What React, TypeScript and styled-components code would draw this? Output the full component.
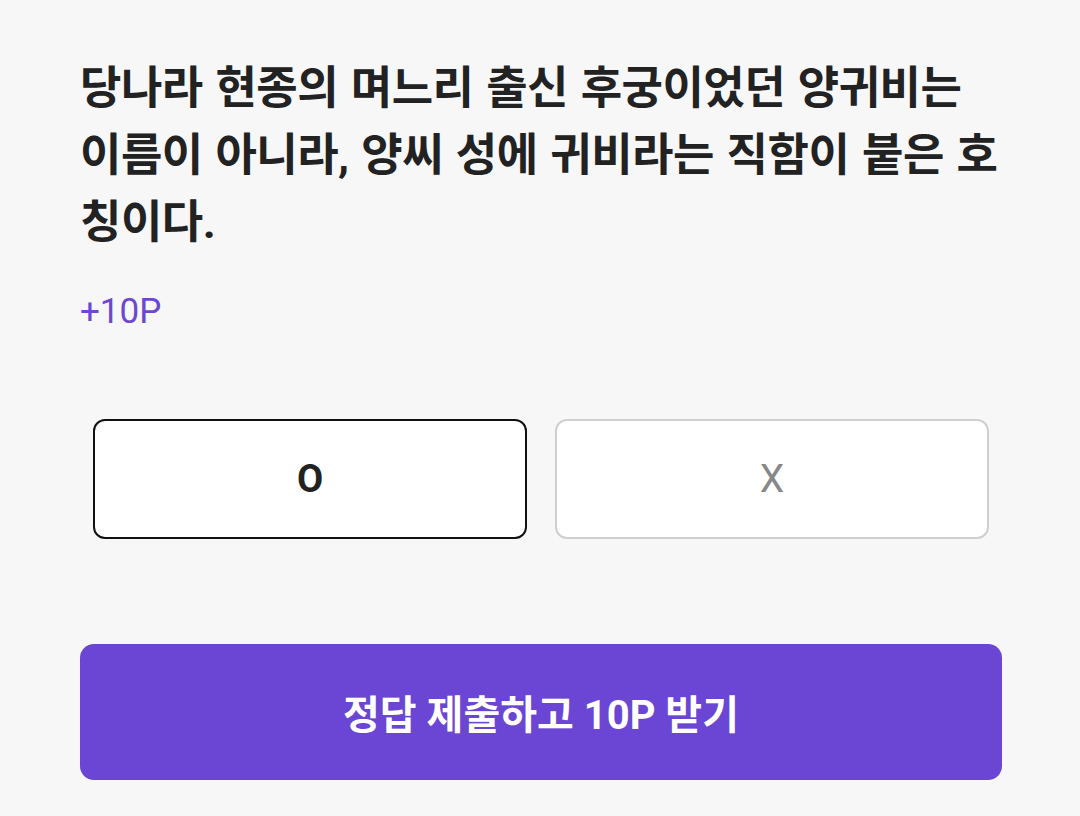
import React, { useState } from 'react'
import styled, { createGlobalStyle } from 'styled-components'

type Answer = 'O' | 'X'

const GlobalStyle = createGlobalStyle`
  html, body {
    margin: 0;
    padding: 0;
    background: #f7f7f7;
  }
  body {
    font-family: Roboto, "Noto Sans CJK KR", sans-serif;
  }
`

const App = (): React.ReactElement => {
  const [selected, setSelected] = useState<Answer>('O')

  return (
    <Page>
      <GlobalStyle />
      <Question>
        당나라 현종의 며느리 출신 후궁이었던 양귀비는 이름이 아니라, 양씨 성에 귀비라는 직함이 붙은 호칭이다.
      </Question>
      <Reward>+10P</Reward>

      <Options>
        {(['O', 'X'] as Answer[]).map((a) => (
          <Option key={a} $active={selected === a} onClick={() => setSelected(a)}>
            {a}
          </Option>
        ))}
      </Options>

      <Submit>정답 제출하고 10P 받기</Submit>
    </Page>
  )
}

const Page = styled.div`
  width: 922px;
  padding: 55px 78px 0 80px;
  display: flex;
  flex-direction: column;
`

const Question = styled.p`
  margin: 0;
  width: 920px;
  color: #222;
  font-size: 45px;
  font-weight: 700;
  line-height: 67px;
  letter-spacing: -0.5px;
  word-spacing: 2px;
  word-break: break-all;
`

const Reward = styled.div`
  margin-top: 36px;
  color: #6d47d1;
  font-size: 35px;
  line-height: 40px;
`

const Options = styled.div`
  display: grid;
  grid-template-columns: 1fr 1fr;
  gap: 28px;
  padding: 0 13px;
  margin-top: 87px;
`

const Option = styled.button<{ $active: boolean }>`
  height: 120px;
  background: #fff;
  border: 2px solid ${(p) => (p.$active ? '#111' : '#cfcfcf')};
  border-radius: 12px;
  font-family: Roboto, "Noto Sans CJK KR", sans-serif;
  font-size: ${(p) => (p.$active ? '38px' : '39px')};
  font-weight: ${(p) => (p.$active ? 700 : 400)};
  color: ${(p) => (p.$active ? '#222' : '#888')};
  cursor: pointer;
`

const Submit = styled.button`
  margin-top: 105px;
  height: 136px;
  background: #6b45d3;
  border: none;
  border-radius: 14px;
  color: #fff;
  font-family: Roboto, "Noto Sans CJK KR", sans-serif;
  font-size: 40px;
  font-weight: 700;
  cursor: pointer;
`

export default App
